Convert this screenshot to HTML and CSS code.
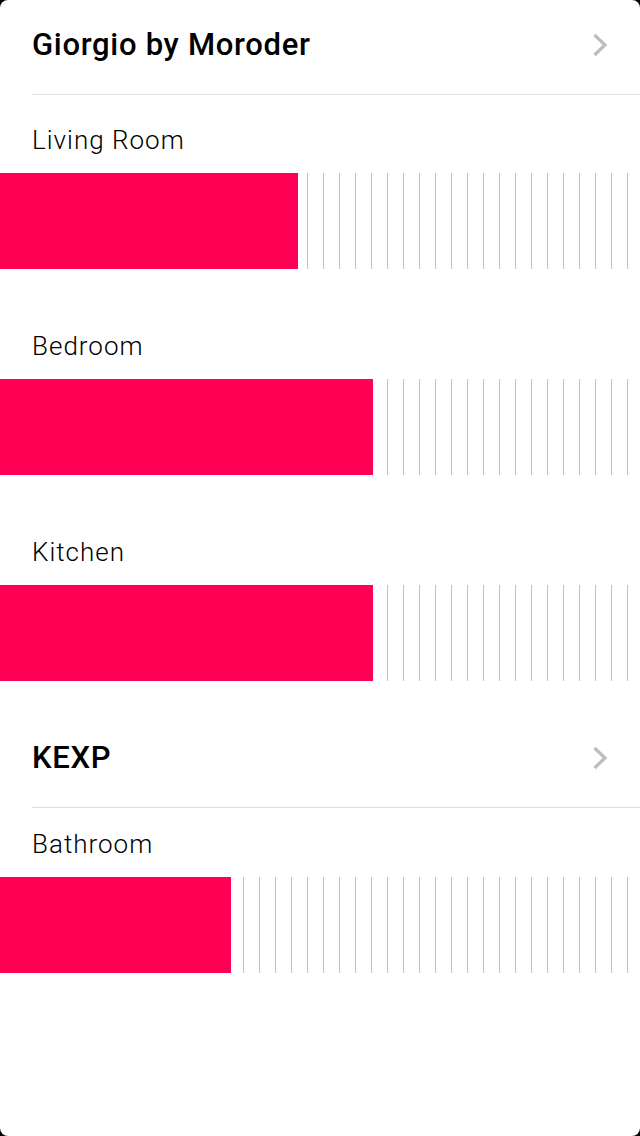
FILE: index.html
```html
<!DOCTYPE html>
<html lang="en">
<head>
<meta charset="utf-8">
<title>Zones</title>
<link rel="stylesheet" href="styles.css">
</head>
<body>
<main class="screen">
  <section class="group">
    <header class="group-head">
      <h2 class="group-title">Giorgio by Moroder</h2>
      <svg class="chevron" width="16" height="24" viewBox="0 0 16 24" aria-hidden="true"><polyline points="2.5,2 13,12 2.5,22" fill="none" stroke="#bdbdbd" stroke-width="3.2"/></svg>
    </header>
    <div class="zones">
      <div class="zone">
        <div class="zone-name">Living Room</div>
        <div class="meter"><div class="fill" style="width:46.5625%"></div></div>
      </div>
      <div class="zone">
        <div class="zone-name">Bedroom</div>
        <div class="meter"><div class="fill" style="width:58.28125%"></div></div>
      </div>
      <div class="zone">
        <div class="zone-name">Kitchen</div>
        <div class="meter"><div class="fill" style="width:58.28125%"></div></div>
      </div>
    </div>
  </section>
  <section class="group group--second">
    <header class="group-head">
      <h2 class="group-title">KEXP</h2>
      <svg class="chevron" width="16" height="24" viewBox="0 0 16 24" aria-hidden="true"><polyline points="2.5,2 13,12 2.5,22" fill="none" stroke="#bdbdbd" stroke-width="3.2"/></svg>
    </header>
    <div class="zones">
      <div class="zone">
        <div class="zone-name">Bathroom</div>
        <div class="meter"><div class="fill" style="width:36.09375%"></div></div>
      </div>
    </div>
  </section>
</main>
</body>
</html>
```
FILE: styles.css
```css
html, body {
  margin: 0;
  padding: 0;
  background: #000;
}

.screen {
  width: 640px;
  height: 1136px;
  background: #fff;
  border-radius: 8px;
  overflow: hidden;
  font-family: Roboto, "Liberation Sans", Arial, sans-serif;
  color: #000;
}

.group-head {
  display: flex;
  align-items: center;
  justify-content: space-between;
  box-sizing: border-box;
  height: 95px;
  margin-left: 32px;
  padding: 0 32px 5px 0;
  border-bottom: 1px solid #dedede;
}

.group-title {
  margin: 0;
  font-size: 31px;
  font-weight: 500;
  line-height: 36px;
  letter-spacing: 0.7px;
}

.chevron {
  display: block;
  flex: none;
}

.zones {
  display: flex;
  flex-direction: column;
  gap: 62px;
  padding-top: 30px;
}

.group--second {
  margin-top: 32px;
}

.group--second .zones {
  padding-top: 21px;
}

.zone {
  display: flex;
  flex-direction: column;
  gap: 18px;
}

.zone-name {
  padding-left: 32px;
  font-size: 26px;
  font-weight: 300;
  line-height: 30px;
  letter-spacing: 1px;
}

.meter {
  display: flex;
  height: 96px;
  background: repeating-linear-gradient(to right,
    transparent 0, transparent 3px,
    #c2c2c2 3px, #c2c2c2 4px,
    transparent 4px, transparent 16px);
}

.fill {
  height: 100%;
  background: #ff0055;
}
```
